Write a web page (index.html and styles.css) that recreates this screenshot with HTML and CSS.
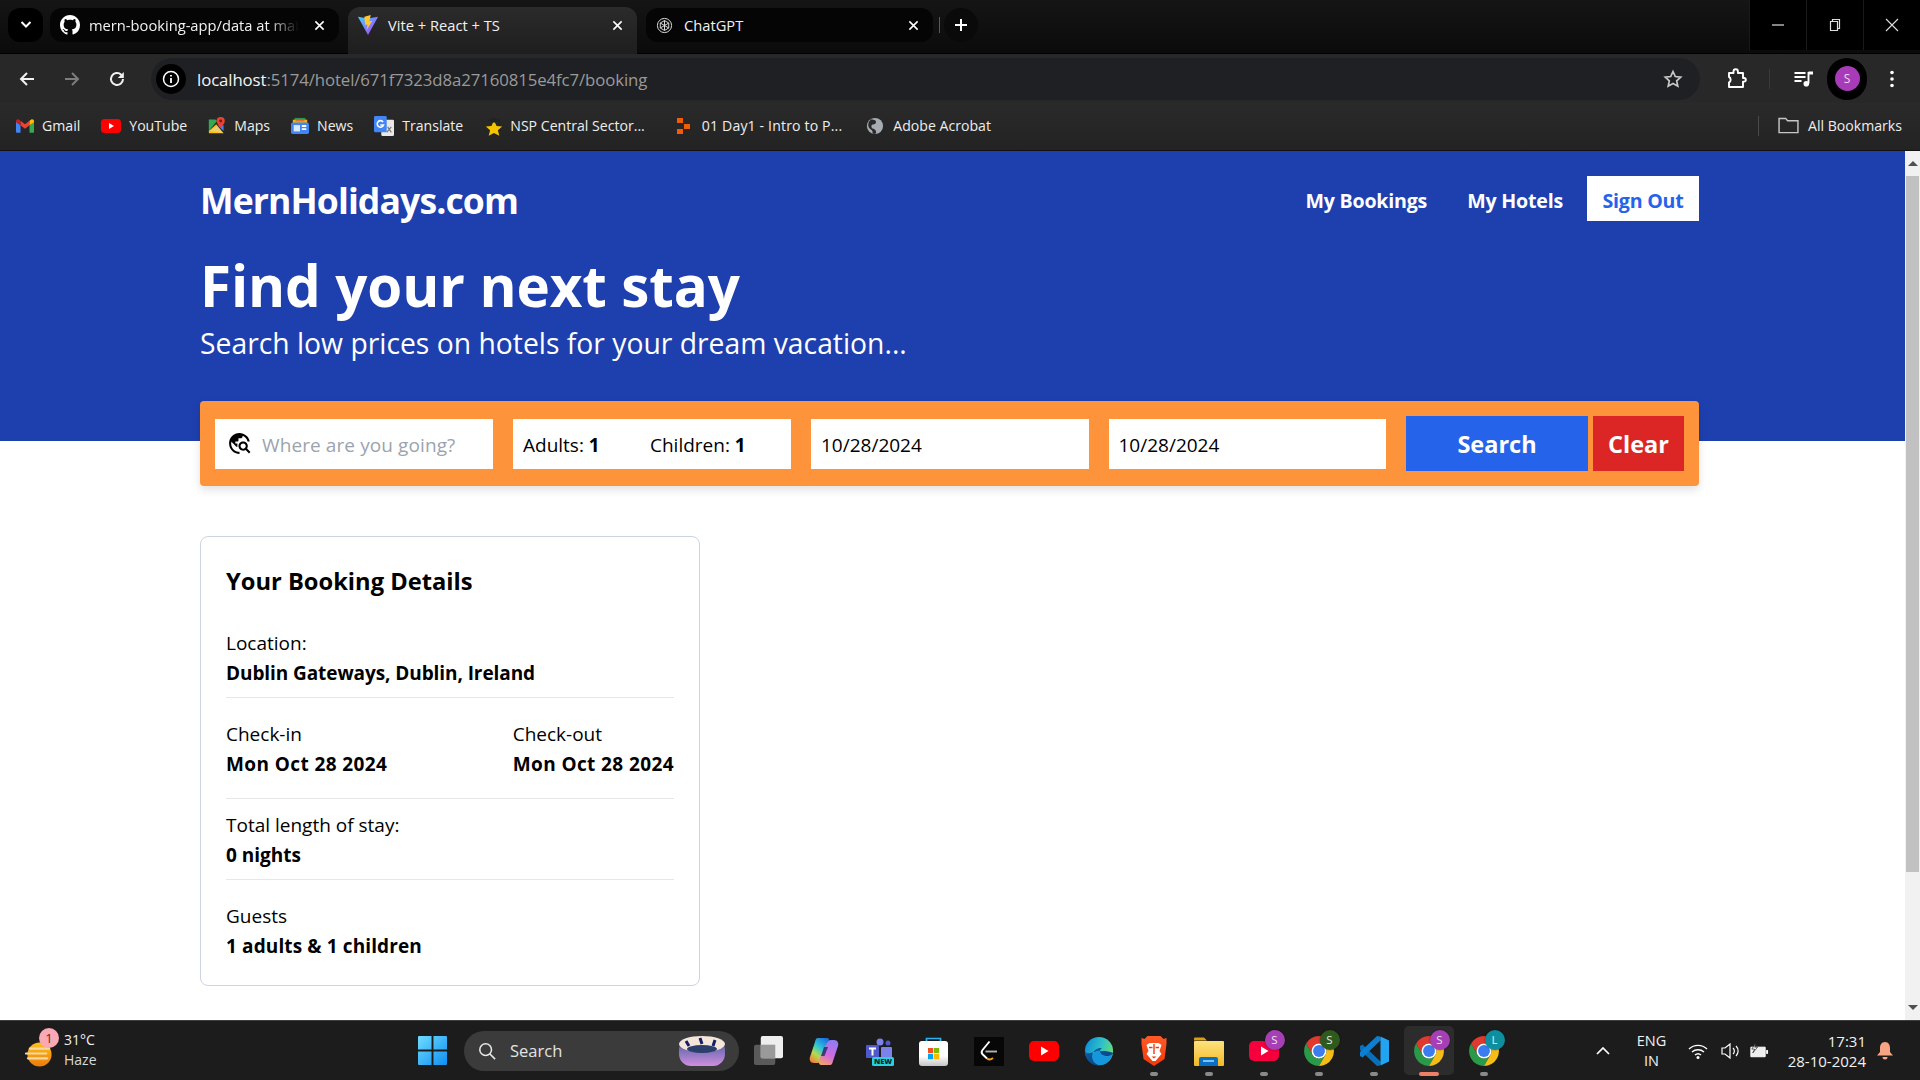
FILE: index.html
```html
<!DOCTYPE html>
<html lang="en">
<head>
<meta charset="utf-8">
<title>Vite + React + TS</title>
<link rel="stylesheet" href="styles.css">
</head>
<body>
<svg class="defs" aria-hidden="true">
  <symbol id="chrome" viewBox="2 2 44 44">
    <path fill="#e0392e" d="M5 13A22 22 0 0 1 43 13H24A11 11 0 0 0 14.500 29.500z"/>
    <path fill="#2b9a48" d="M5 13A22 22 0 0 0 24 46L33.500 29.500A11 11 0 0 1 14.500 29.500z"/>
    <path fill="#f6bd17" d="M43 13A22 22 0 0 1 24 46L33.500 29.500A11 11 0 0 0 24 13z"/>
    <circle cx="24" cy="24" r="11" fill="#fff"/>
    <circle cx="24" cy="24" r="8.700" fill="#3b7df0"/>
  </symbol>
  <symbol id="x" viewBox="0 0 12 12">
    <path d="M1.500 1.500l9 9M10.500 1.500l-9 9" fill="none" stroke="#fff" stroke-width="1.700"/>
  </symbol>
</svg>

<div class="chrome">
  <div class="tabstrip">
    <div class="tab-search"><svg width="14" height="10" viewBox="0 0 14 10"><path d="M2.500 2l4.500 4.500L11.500 2" fill="none" stroke="#fff" stroke-width="2"/></svg></div>
    <div class="tab tab-idle tab-first">
      <svg class="tab-ico" viewBox="0 0 16 16"><path fill="#fff" d="M8 0C3.580 0 0 3.580 0 8c0 3.540 2.290 6.530 5.470 7.590.4.070.55-.17.55-.38 0-.19-.01-.82-.01-1.490-2.010.37-2.530-.49-2.690-.94-.09-.23-.48-.94-.82-1.130-.28-.15-.68-.52-.01-.53.630-.01 1.080.58 1.230.82.720 1.210 1.870.87 2.330.66.070-.52.28-.87.510-1.070-1.780-.2-3.640-.89-3.640-3.950 0-.87.310-1.590.820-2.150-.08-.2-.36-1.020.08-2.120 0 0 .67-.21 2.200.82.640-.18 1.320-.27 2-.27s1.360.09 2 .27c1.530-1.040 2.200-.82 2.200-.82.440 1.100.160 1.920.080 2.120.510.560.820 1.270.820 2.150 0 3.070-1.870 3.750-3.650 3.950.290.250.540.730.540 1.480 0 1.070-.01 1.930-.01 2.200 0 .210.150.460.550.380A8.010 8.010 0 0 0 16 8c0-4.420-3.580-8-8-8z"/></svg>
      <span class="tab-title tab-fade">mern-booking-app/data at mai</span>
      <svg class="tab-close" viewBox="0 0 12 12"><use href="#x"/></svg>
    </div>
    <div class="tab tab-active">
      <svg class="tab-ico" viewBox="0 0 24 24"><defs><linearGradient id="vg" x1="0" y1="0" x2="1" y2="1"><stop offset="0" stop-color="#41d1ff"/><stop offset="1" stop-color="#bd34fe"/></linearGradient></defs><path fill="url(#vg)" d="M1 3l11 2 11-2-11 20z"/><path fill="#ffca28" d="M15 1L8 3l1 9 2.500-.5-1 6 6-10-3 .5z"/></svg>
      <span class="tab-title">Vite + React + TS</span>
      <svg class="tab-close" viewBox="0 0 12 12"><use href="#x"/></svg>
    </div>
    <div class="tab tab-idle tab-third">
      <svg class="tab-ico tab-ico-sm" viewBox="0 0 24 24"><g fill="none" stroke="#ddd" stroke-width="1.400"><circle cx="12" cy="12" r="10"/><path d="M12 5l6 3.500v7L12 19l-6-3.500v-7z"/><path d="M12 5v7l6 3.500M12 12l-6 3.500M6 8.500l6 3.500M18 8.500L12 12M12 12v7"/></g></svg>
      <span class="tab-title">ChatGPT</span>
      <svg class="tab-close" viewBox="0 0 12 12"><use href="#x"/></svg>
    </div>
    <div class="tab-sep"></div>
    <div class="tab-new"><svg width="14" height="14" viewBox="0 0 14 14"><path d="M7 1v12M1 7h12" stroke="#fff" stroke-width="2"/></svg></div>
    <div class="winctl">
      <div class="winbtn"><svg width="12" height="12" viewBox="0 0 12 12"><path d="M0 6h12" stroke="#ddd" stroke-width="1.200"/></svg></div>
      <div class="winbtn"><svg width="12" height="14" viewBox="0 0 12 14"><path d="M1.500 3.500h7v9h-7zM3.500 3.500v-2h7v9h-2" fill="none" stroke="#ddd" stroke-width="1.200"/></svg></div>
      <div class="winbtn"><svg width="14" height="14" viewBox="0 0 14 14"><path d="M1 1l12 12M13 1L1 13" stroke="#ddd" stroke-width="1.100"/></svg></div>
    </div>
  </div>

  <div class="toolbar">
    <svg class="tb-ico tb-back" viewBox="0 0 18 18"><path d="M16 9H3M9 3L3 9l6 6" fill="none" stroke="#f1f1f1" stroke-width="2"/></svg>
    <svg class="tb-ico tb-fwd" viewBox="0 0 18 18"><path d="M2 9h13M9 3l6 6-6 6" fill="none" stroke="#7d7d7d" stroke-width="2"/></svg>
    <svg class="tb-ico tb-reload" viewBox="0 0 18 18"><path d="M15 9a6 6 0 1 1-1.800-4.300L15 6.500" fill="none" stroke="#f1f1f1" stroke-width="2"/><path d="M15.800 2v6h-6z" fill="#f1f1f1"/></svg>
    <div class="omnibox">
      <div class="site-info"><svg width="18" height="18" viewBox="0 0 18 18"><circle cx="9" cy="9" r="7.500" fill="none" stroke="#fff" stroke-width="1.500"/><path d="M9 8v5M9 5v1.600" stroke="#fff" stroke-width="1.800"/></svg></div>
      <span class="url"><span class="url-host">localhost</span>:5174/hotel/671f7323d8a27160815e4fc7/booking</span>
      <svg class="omni-star" viewBox="0 0 20 20"><path d="M10 2.500l2.300 5 5.400.6-4 3.700 1.100 5.400L10 14.500l-4.800 2.700 1.100-5.400-4-3.700 5.400-.6z" fill="none" stroke="#c9c9c9" stroke-width="1.700"/></svg>
    </div>
    <svg class="tb-ext" viewBox="0 0 24 24"><path d="M5 6h4.500V4.500a2.200 2.200 0 0 1 4.400 0V6H19v5h1a1.800 1.800 0 0 1 0 3.600h-1V20H5v-4.500c2.200-.8 2.200-4.700 0-5.500z" fill="none" stroke="#fff" stroke-width="1.900" stroke-linejoin="round"/></svg>
    <div class="tb-sep"></div>
    <svg class="tb-media" viewBox="0 0 20 20"><path d="M1 4h11M1 8h11M1 12h7" stroke="#fff" stroke-width="1.900"/><path d="M15 3v11.500" stroke="#fff" stroke-width="1.900"/><circle cx="12.800" cy="14.800" r="2.800" fill="#fff"/><path d="M15 2.500h4.500v3H15z" fill="#fff"/></svg>
    <div class="profile"><div class="avatar">S</div></div>
    <svg class="tb-menu" viewBox="0 0 4 18"><circle cx="2" cy="2.500" r="1.800" fill="#fff"/><circle cx="2" cy="9" r="1.800" fill="#fff"/><circle cx="2" cy="15.500" r="1.800" fill="#fff"/></svg>
  </div>

  <div class="bookmarks">
    <div class="bm bm-gmail"><svg class="bm-ico" viewBox="0 0 24 18"><path fill="#4285f4" d="M0 3v13.500C0 17.300.7 18 1.500 18H6V8z"/><path fill="#34a853" d="M18 8v10h4.500c.8 0 1.500-.7 1.500-1.500V3z"/><path fill="#ea4335" d="M6 8V2l6 4.500L18 2v6l-6 4.500z"/><path fill="#c5221f" d="M0 2.500V4l6 4V2L4 .5C2.300-.7 0 .5 0 2.500z"/><path fill="#fbbc04" d="M24 2.500V4l-6 4V2l2-1.500c1.700-1.200 4 0 4 2z"/></svg><span>Gmail</span></div>
    <div class="bm bm-yt"><svg class="bm-ico bm-ico-w" viewBox="0 0 20 14"><rect width="20" height="14" rx="3.500" fill="#f00"/><path d="M8 4l5 3-5 3z" fill="#fff"/></svg><span>YouTube</span></div>
    <div class="bm bm-maps"><svg class="bm-ico" viewBox="0 0 20 22"><path fill="#34a853" d="M0 3h8l2 2-10 12z"/><path fill="#fbbc04" d="M0 17L9 9l9 11H1.500A1.500 1.500 0 0 1 0 18.500z"/><path fill="#4285f4" d="M11 10l7 7V10z"/><path fill="#ddd" d="M0 17L18 20l-8-9z" opacity=".5"/><path fill="#ea4335" d="M14.500 0A5 5 0 0 1 19.500 5c0 3.500-5 8-5 8s-5-4.500-5-8a5 5 0 0 1 5-5z"/><circle cx="14.500" cy="5" r="1.800" fill="#7a1a12"/></svg><span>Maps</span></div>
    <div class="bm bm-news"><svg class="bm-ico" viewBox="0 0 20 20"><path fill="#0f9d58" d="M4 1h12v5H4z"/><path fill="#f4b400" d="M2 3h16v5H2z"/><path fill="#ea4335" d="M5 2h10v3H5z" opacity=".6"/><rect x="0" y="6" width="20" height="13" rx="2" fill="#4285f4"/><rect x="3" y="9" width="7" height="7" fill="#dce9fb"/><path d="M12 9h5v2h-5zM12 12.500h5v2h-5z" fill="#fff"/></svg><span>News</span></div>
    <div class="bm bm-tr"><svg class="bm-ico bm-ico-w" viewBox="0 0 22 22"><rect x="8" y="4" width="14" height="18" rx="1.500" fill="#e8e8e8"/><rect width="14" height="18" rx="1.500" fill="#4285f4"/><path d="M10 6.500A3.600 3.600 0 1 0 10.500 10H7" fill="none" stroke="#fff" stroke-width="1.700"/><path d="M15 12l4 6M19 12l-5 6" stroke="#777" stroke-width="1.300"/></svg><span>Translate</span></div>
    <div class="bm bm-nsp"><svg class="bm-ico bm-ico-w" viewBox="0 0 22 22"><path fill="#f5c400" d="M11 5l2.800 6 6.200.6-4.700 4 1.500 6.200L11 18.600l-5.800 3.200 1.500-6.200-4.700-4 6.200-.6z"/><path fill="#222" d="M4 5l7-3 7 3-7 2.500z"/><path d="M17 5v5" stroke="#222" stroke-width="1"/></svg><span>NSP Central Sector...</span></div>
    <div class="bm bm-day"><svg class="bm-ico bm-ico-sq" viewBox="0 0 16 16"><path fill="#f25c05" d="M1 0h6v5H1zM8 6h6v5H8zM1 11h6v5H1z"/></svg><span>01 Day1 - Intro to P...</span></div>
    <div class="bm bm-adobe"><svg class="bm-ico" viewBox="0 0 20 20"><circle cx="10" cy="10" r="9" fill="#a8abb0"/><path d="M6 2.500c3 .5 6 1.500 5 4s-5 1-5 4 4 2 5 5-1 3-2 3.500l-2-1c1-1 0-3-1.500-4S2 11 2.500 8 4 4 6 2.500z" fill="#2a2a2a"/></svg><span>Adobe Acrobat</span></div>
    <div class="bm-all">
      <div class="bm-sep"></div>
      <svg class="bm-folder" viewBox="0 0 22 18"><path d="M1 16.500v-15h7l2 2.500h11v12.500z" fill="none" stroke="#c7c7c7" stroke-width="1.500"/></svg>
      <span>All Bookmarks</span>
    </div>
  </div>
</div>

<div class="viewport">
  <div class="page">
    <header class="hero">
      <div class="hero-inner">
        <div class="topnav">
          <span class="logo">MernHolidays.com</span>
          <nav class="navlinks">
            <a class="navlink">My Bookings</a>
            <a class="navlink">My Hotels</a>
            <a class="signout">Sign Out</a>
          </nav>
        </div>
        <h1 class="hero-title">Find your next stay</h1>
        <p class="hero-sub">Search low prices on hotels for your dream vacation...</p>
      </div>
    </header>
    <div class="content">
      <form class="searchbar">
        <div class="field field-where">
          <svg class="globe" viewBox="0 0 24 24"><path fill="#000" d="M19.300 16.900c.4-.7.7-1.500.7-2.400 0-2.500-2-4.500-4.500-4.500S11 12 11 14.500s2 4.500 4.500 4.500c.9 0 1.700-.3 2.400-.7l3.200 3.200 1.400-1.400-3.200-3.200zm-3.800.1c-1.400 0-2.500-1.100-2.500-2.500s1.100-2.500 2.500-2.500 2.500 1.100 2.500 2.500-1.100 2.500-2.500 2.500zM12 20v2C6.480 22 2 17.520 2 12S6.480 2 12 2c4.840 0 8.870 3.440 9.800 8h-2.070c-.64-2.460-2.400-4.470-4.730-5.410V5c0 1.100-.9 2-2 2h-2v2c0 .55-.45 1-1 1H8v2h2v3H9l-4.790-4.790C4.080 10.790 4 11.380 4 12c0 4.410 3.590 8 8 8z"/></svg>
          <span class="placeholder">Where are you going?</span>
        </div>
        <div class="field field-guests">
          <span class="guest-adults">Adults: <b>1</b></span>
          <span>Children: <b>1</b></span>
        </div>
        <div class="field field-date">10/28/2024</div>
        <div class="field field-date">10/28/2024</div>
        <button class="btn btn-search" type="button">Search</button>
        <button class="btn btn-clear" type="button">Clear</button>
      </form>

      <section class="card">
        <h2 class="card-title">Your Booking Details</h2>
        <div class="row row-location">
          <div>Location:</div>
          <div class="val val-loc">Dublin Gateways, Dublin, Ireland</div>
        </div>
        <div class="row row-dates">
          <div>
            <div>Check-in</div>
            <div class="val val-date">Mon Oct 28 2024</div>
          </div>
          <div>
            <div>Check-out</div>
            <div class="val val-date">Mon Oct 28 2024</div>
          </div>
        </div>
        <div class="row row-stay">
          <div>Total length of stay:</div>
          <div class="val">0 nights</div>
        </div>
        <div class="row-guests">
          <div>Guests</div>
          <div class="val val-guests">1 adults &amp; 1 children</div>
        </div>
      </section>
    </div>
  </div>
  <div class="scrollbar">
    <div class="sb-btn"><span class="arrow-up"></span></div>
    <div class="sb-track"><div class="sb-thumb"></div></div>
    <div class="sb-btn"><span class="arrow-down"></span></div>
  </div>
</div>

<footer class="taskbar">
  <div class="weather">
    <svg class="weather-ico" viewBox="0 0 30 30"><defs><linearGradient id="sun" x1="0" y1="0" x2="0" y2="1"><stop offset="0" stop-color="#fdc21a"/><stop offset="1" stop-color="#ee7a0c"/></linearGradient></defs><circle cx="15" cy="16" r="12.500" fill="url(#sun)"/><path d="M5 10h20M1 15h21M3 20h20" stroke="#f3d9a4" stroke-width="2.200" stroke-linecap="round"/></svg>
    <span class="badge">1</span>
    <div class="weather-text"><span>31°C</span><span class="haze">Haze</span></div>
  </div>
  <svg class="winlogo" viewBox="0 0 30 30"><defs><linearGradient id="wl" x1="0" y1="0" x2="1" y2="1"><stop offset="0" stop-color="#6fdcff"/><stop offset="1" stop-color="#0f8ff0"/></linearGradient></defs><path fill="url(#wl)" d="M0 1a1 1 0 0 1 1-1h13v14H0zM16 0h13a1 1 0 0 1 1 1v13H16zM0 16h14v14H1a1 1 0 0 1-1-1zM16 16h14v13a1 1 0 0 1-1 1H16z"/></svg>
  <div class="tb-search">
    <svg class="tb-search-ico" viewBox="0 0 20 20"><circle cx="8.500" cy="8.500" r="6.500" fill="none" stroke="#e8e8e8" stroke-width="1.700"/><path d="M13 13l6 6" stroke="#e8e8e8" stroke-width="1.800"/></svg>
    <span>Search</span>
    <svg class="carousel" viewBox="0 0 48 32"><defs><linearGradient id="cg" x1="0" y1="0" x2="0" y2="1"><stop offset="0" stop-color="#3c5a98"/><stop offset="1" stop-color="#d08ee0"/></linearGradient></defs><rect x="1" y="3" width="46" height="28" rx="12" fill="url(#cg)"/><ellipse cx="24" cy="9" rx="23" ry="8" fill="#f5e6da"/><ellipse cx="24" cy="14" rx="15" ry="4" fill="#2c3f6b"/><path d="M8 6l3 5M22 3l2 6M37 5l-2 6" stroke="#16206a" stroke-width="3"/></svg>
  </div>
  <svg class="task-view" viewBox="0 0 30 30"><rect x="0" y="9" width="22" height="21" rx="2" fill="#5a5a5a"/><rect x="7" y="0" width="23" height="23" rx="2" fill="#eee"/><rect x="7" y="9" width="15" height="14" fill="#9a9a9a"/></svg>
  <div class="apps">
    <div class="app"><svg viewBox="0 0 30 30"><defs><linearGradient id="co1" x1=".8" y1="0" x2=".2" y2="1"><stop offset="0" stop-color="#1c6fe0"/><stop offset=".4" stop-color="#2ec5d8"/><stop offset=".7" stop-color="#b6d94c"/><stop offset="1" stop-color="#f2803c"/></linearGradient><linearGradient id="co2" x1=".7" y1="0" x2=".3" y2="1"><stop offset="0" stop-color="#8f7cf0"/><stop offset=".6" stop-color="#d36be0"/><stop offset="1" stop-color="#f2a06c"/></linearGradient></defs><path fill="url(#co1)" d="M9 2H18C20 2 20.500 4 20 6L14 22C13 25 11 27 8 27H5C1.500 27 0 24 1 21L6 6C6.500 4 7 2 9 2z"/><path fill="url(#co2)" d="M21 29H12C10 29 9.500 26 10 24L17 9C18 6 20 4 22 4H25C28.500 4 30 7 29 10L24 25C23.500 27 23 29 21 29z"/><path d="M15 11h4l-3.500 9H12z" fill="#15255a" opacity=".75"/></svg></div>
    <div class="app"><svg viewBox="0 0 30 30"><circle cx="16" cy="6" r="3.500" fill="#7b83eb"/><circle cx="24" cy="7" r="2.500" fill="#5059c9"/><rect x="17" y="11" width="11" height="12" rx="1" fill="#7b83eb"/><rect x="2" y="9" width="13" height="13" rx="1" fill="#5059c9"/><path d="M5 12.500h7M8.500 12.500v7" stroke="#fff" stroke-width="2"/></svg><span class="new-tag">NEW</span></div>
    <div class="app"><svg viewBox="0 0 30 30"><defs><linearGradient id="st" x1="0" y1="0" x2="0" y2="1"><stop offset=".6" stop-color="#fff"/><stop offset="1" stop-color="#c4c4c4"/></linearGradient></defs><path d="M7.500 7V2.500h14V7" fill="none" stroke="#2bb3f0" stroke-width="1.700"/><path d="M0 8a3 3 0 0 1 3-3h23a3 3 0 0 1 3 3v19a3 3 0 0 1-3 3H3a3 3 0 0 1-3-3z" fill="url(#st)"/><path fill="#f25022" d="M9 12h5.200v5.200H9z"/><path fill="#7fba00" d="M15 12h5.200v5.200H15z"/><path fill="#00a4ef" d="M9 18h5.200v5.200H9z"/><path fill="#ffb900" d="M15 18h5.200v5.200H15z"/></svg></div>
    <div class="app"><svg viewBox="0 0 30 30"><rect width="30" height="29" y="1" fill="#070707"/><path d="M15.500 5.500L8.500 14c-1.200 1.500-1 3.200.3 4.500L13 22.500" fill="none" stroke="#fff" stroke-width="1.900"/><path d="M13 22.500c2 1.500 4 1.300 6-.5" fill="none" stroke="#f89f1b" stroke-width="1.900"/><path d="M11.500 15.500H23" stroke="#b3b3b3" stroke-width="1.900"/></svg></div>
    <div class="app"><svg viewBox="0 0 30 30"><rect y="5" width="30" height="20" rx="5" fill="#f00"/><path d="M12 10.500l7.500 4.500-7.500 4.500z" fill="#fff"/></svg></div>
    <div class="app"><svg viewBox="0 0 30 32"><defs><linearGradient id="eg" x1="0" y1=".3" x2="1" y2=".6"><stop offset="0" stop-color="#0f8fd8"/><stop offset=".55" stop-color="#2fc3c8"/><stop offset="1" stop-color="#6ddc70"/></linearGradient><linearGradient id="eb" x1="0" y1="0" x2="1" y2="1"><stop offset="0" stop-color="#0e5ea8"/><stop offset="1" stop-color="#0a3d78"/></linearGradient></defs><circle cx="15" cy="16" r="15" fill="url(#eg)"/><path d="M30 18c0 2-3 3.500-6.500 3.500-4 0-7.500-2-7.500-5 0-1.500 1-3 2-3.500-6-1-10.500 4-10 9 .5 4 4 9 10 9.400C8 33 0 26 0 16 2 23 14 12 30 18z" fill="url(#eb)"/><path d="M16 16.500c.5 3 3 4.800 7 5 3 0 5.500-1 6.500-2.500-1 7-7 12-13 12-6 0-9-5-8.500-8.500.4-4 4-8 8-7-1 .3-.5 1-.5 1.500z" fill="#1497dc"/></svg></div>
    <div class="app has-dot"><svg viewBox="-2.500 0 30 30"><defs><linearGradient id="br" x1="0" y1="0" x2="0" y2="1"><stop offset="0" stop-color="#ff5a26"/><stop offset="1" stop-color="#f2390a"/></linearGradient></defs><path d="M6 0h13l3 3 3-1v6l-2 15-10.500 7L2 23 0 8V2l3 1z" fill="url(#br)"/><path d="M5 9l3-2h9l3 2-2 6 2 3-6 7h-3l-6-7 2-3z" fill="#fff"/><path d="M7.500 11.500h3.500M14 11.500h3.500M12.500 8v10" stroke="#f2390a" stroke-width="1.400"/><path d="M10 20.500h5l-2.500 2z" fill="#f2390a"/></svg></div>
    <div class="app has-dot"><svg viewBox="0 0 30 30"><defs><linearGradient id="fo" x1="0" y1="0" x2="0" y2="1"><stop offset="0" stop-color="#fde27e"/><stop offset="1" stop-color="#f2b928"/></linearGradient></defs><path d="M0 2.500A1 1 0 0 1 1 1.500h9l3 3H0z" fill="#d9a012"/><rect y="5" width="30" height="25" rx="1" fill="url(#fo)"/><path d="M5 30v-7a2 2 0 0 1 2-2h15a2 2 0 0 1 2 2v7z" fill="#0b6fc4"/><rect x="9" y="24" width="11" height="2" fill="#7cc4f5"/></svg></div>
    <div class="app has-dot"><svg viewBox="0 0 30 30"><rect y="5" width="30" height="20" rx="5" fill="#f5003c"/><path d="M12 10.500l7.500 4.500-7.500 4.500z" fill="#fff"/></svg><span class="pbadge pb-purple">S</span></div>
    <div class="app has-dot"><svg viewBox="0 0 44 44"><use href="#chrome"/></svg><span class="pbadge pb-green">S</span></div>
    <div class="app has-dot"><svg viewBox="0 0 30 30"><path d="M1 10l2.500-1.500L22 26l-1 3.500-3 .5L1 14z" fill="#0a6fb8"/><path d="M1 20l2.500 1.500L22 4l-1-3.500-3-.5L1 16z" fill="#0c7fd2"/><path d="M21.500 0.500L30 4.500v21l-8.500 4z" fill="#23a4f2"/></svg></div>
    <div class="app has-dot app-active"><svg viewBox="0 0 44 44"><use href="#chrome"/></svg><span class="pbadge pb-purple">S</span></div>
    <div class="app has-dot"><svg viewBox="0 0 44 44"><use href="#chrome"/></svg><span class="pbadge pb-teal">L</span></div>
  </div>
  <div class="tray">
    <svg class="tray-chev" viewBox="0 0 14 8"><path d="M1 7l6-6 6 6" fill="none" stroke="#fff" stroke-width="1.700"/></svg>
    <div class="lang"><span>ENG</span><span>IN</span></div>
    <svg class="tray-wifi" viewBox="0 0 20 16"><path d="M1 6a13 13 0 0 1 18 0M4 9a9 9 0 0 1 12 0M7 12a4.500 4.500 0 0 1 6 0" fill="none" stroke="#fff" stroke-width="1.400"/><circle cx="10" cy="14.500" r="1.500" fill="#fff"/></svg>
    <svg class="tray-vol" viewBox="0 0 20 16"><path d="M1 5h3l5-4v14l-5-4H1z" fill="none" stroke="#fff" stroke-width="1.200"/><path d="M12 5a4 4 0 0 1 0 6M15 3a7 7 0 0 1 0 10" fill="none" stroke="#fff" stroke-width="1.200"/></svg>
    <svg class="tray-bat" viewBox="0 0 22 16"><path d="M3 4h15v10H3z" fill="#eee" stroke="#fff"/><path d="M19 7h2v4h-2z" fill="#fff"/><path d="M8 0L4 6h3l-2 4 5-6H7z" fill="#fff" stroke="#1c1c1c" stroke-width=".7"/></svg>
    <div class="clock"><span>17:31</span><span>28-10-2024</span></div>
    <svg class="tray-bell" viewBox="0 0 16 18"><path d="M8 0c3.500 0 5 3 5 6v4l3 3.500H0L3 10V6c0-3 1.500-6 5-6z" fill="#f5a582"/><path d="M5.500 15h5a2.500 2.500 0 0 1-5 0z" fill="#f5a582"/></svg>
  </div>
</footer>
</body>
</html>
```

FILE: styles.css
```css
* { box-sizing: border-box; }
html, body { margin: 0; padding: 0; height: 100%; overflow: hidden; }
body {
  display: flex;
  flex-direction: column;
  height: 1080px;
  font-family: "Open Sans", "Noto Sans", "Liberation Sans", sans-serif;
  background: #fff;
  color: #000;
}
.defs { display: none; }

/* browser chrome */
.chrome { flex: none; height: 151px; display: flex; flex-direction: column; color: #f1f1f1; }
.tabstrip {
  height: 54px; flex: none; display: flex; align-items: flex-start;
  background: linear-gradient(#151515, #0b0b0b);
  border-bottom: 1px solid #000;
  padding-left: 8px; position: relative;
}
.tab-search {
  width: 35px; height: 34px; margin-top: 8px; border-radius: 12px; background: #000;
  display: flex; align-items: center; justify-content: center; margin-right: 7px;
}
.tab { display: flex; align-items: center; position: relative; font-size: 14.700px; }
.tab-idle { height: 34px; margin-top: 8px; background: #050505; border-radius: 12px; }
.tab-first { width: 289px; margin-right: 9px; }
.tab-active {
  width: 289px; height: 47px; margin-top: 7px; margin-right: 9px;
  background: linear-gradient(#2b2b2b, #1e1e1e); border-radius: 12px 12px 0 0; padding-bottom: 11px;
}
.tab-third { width: 287px; margin-right: 6px; }
.tab-ico { width: 20px; height: 20px; margin-left: 10px; flex: none; }
.tab-ico-sm { width: 17px; height: 17px; }
.tab-active .tab-ico { width: 22px; height: 22px; margin-left: 9px; }
.tab-third .tab-ico { margin-left: 10px; }
.tab-title { margin-left: 9px; white-space: nowrap; flex: none; color: #f1f1f1; }
.tab-third .tab-title { margin-left: 11px; }
.tab-fade { -webkit-mask-image: linear-gradient(90deg, #000 85%, transparent 100%); mask-image: linear-gradient(90deg, #000 85%, transparent 100%); }
.tab-close { position: absolute; right: 14px; width: 11px; height: 11px; }
.tab-sep { width: 1px; height: 16px; background: #5a5a5a; margin: 17px 4px 0 0; }
.tab-new {
  width: 34px; height: 34px; margin-top: 8px; border-radius: 50%; background: #0a0a0a;
  display: flex; align-items: center; justify-content: center;
}
.winctl { margin-left: auto; display: flex; height: 50px; background: #000; }
.winbtn { width: 57px; display: flex; align-items: center; justify-content: center; border-left: 1px solid #1a1a1a; }

.toolbar {
  height: 49px; flex: none; display: flex; align-items: center; padding-left: 18px;
  background: #282828; position: relative;
}
.tb-ico { width: 18px; height: 18px; flex: none; margin-right: 27px; }
.omnibox {
  width: 1549px; height: 42px; margin-left: -2px; border-radius: 21px; background: #1f2023;
  display: flex; align-items: center; flex: none; padding-left: 5px;
}
.site-info { width: 30px; height: 30px; border-radius: 50%; background: #000; display: flex; align-items: center; justify-content: center; flex: none; }
.url { margin-left: 11px; margin-top: 2px; font-size: 16.800px; color: #9a9a9a; white-space: nowrap; letter-spacing: -.1px; }
.url-host { color: #f4f4f4; }
.omni-star { width: 20px; height: 20px; margin-left: auto; margin-right: 17px; }
.tb-ext { width: 24px; height: 24px; margin-left: 24px; flex: none; }
.tb-sep { width: 1px; height: 20px; background: #3a3a3a; margin-left: 21px; flex: none; }
.tb-media { width: 21px; height: 20px; margin-left: 23px; flex: none; }
.profile { width: 40px; height: 42px; border-radius: 20px; background: #000; margin-left: 13px; display: flex; align-items: center; justify-content: center; flex: none; }
.avatar { width: 25px; height: 25px; border-radius: 50%; background: #a83bb8; color: #f0d8f4; font-size: 12px; display: flex; align-items: center; justify-content: center; }
.tb-menu { width: 4px; height: 18px; margin-left: 23px; flex: none; }

.bookmarks {
  height: 48px; flex: none; display: flex; align-items: center; padding: 0 0 2px 16px;
  background: linear-gradient(#2a2a2a, #232323); font-size: 14.100px; color: #eee;
  border-bottom: 1px solid #111;
}
.bm { display: flex; align-items: center; gap: 8px; margin-right: 21px; white-space: nowrap; }
.bm-ico { width: 18px; height: 18px; flex: none; }
.bm-ico-w { width: 20px; height: 20px; }
.bm-ico-sq { width: 16px; height: 16px; }
.bm-nsp { gap: 6px; margin-right: 31px; }
.bm-day { gap: 10px; margin-right: 24px; letter-spacing: .15px; }
.bm-adobe { gap: 9px; }
.bm-all { margin-left: auto; display: flex; align-items: center; padding-right: 18px; }
.bm-sep { width: 1px; height: 20px; background: #4a4a4a; margin-right: 19px; }
.bm-folder { width: 21px; height: 17px; margin-right: 9px; }

/* page */
.viewport { flex: 1; min-height: 0; display: flex; overflow: hidden; }
.page { flex: 1; min-width: 0; background: #fff; overflow: hidden; }
.hero { background: #1e40af; height: 290px; }
.hero-inner { padding: 25px 206px 0 200px; color: #fff; }
.topnav { display: flex; justify-content: space-between; align-items: flex-start; }
.logo { font-size: 35.600px; font-weight: 700; letter-spacing: -.9px; line-height: 48px; }
.navlinks { display: flex; align-items: center; }
.navlink { font-size: 19.600px; font-weight: 700; line-height: 49px; height: 45px; margin-right: 40px; letter-spacing: -.2px; }
.navlink + .navlink { margin-right: 24px; }
.signout { background: #fff; color: #2563eb; font-size: 19.600px; font-weight: 700; height: 45px; line-height: 49px; width: 112px; text-align: center; letter-spacing: -.2px; }
.hero-title { margin: 24px 0 0; font-size: 56.500px; font-weight: 700; line-height: 75px; letter-spacing: -.1px; }
.hero-sub { margin: 0; font-size: 28.300px; line-height: 40px; font-weight: 400; }

.content { padding: 0 206px 0 200px; }
.searchbar {
  margin-top: -40px; height: 85px; padding: 15px; display: flex; align-items: center;
  background: #fd943c; border-radius: 4px; box-shadow: 0 4px 8px rgba(0,0,0,.12);
  position: relative; font-size: 19px;
}
.field { height: 50px; background: #fff; display: flex; align-items: center; flex: none; width: 278px; margin-right: 20px; }
.field-where { padding-left: 12px; }
.globe { width: 25px; height: 25px; flex: none; }
.placeholder { margin-left: 10px; margin-top: 2px; color: #9ca3af; white-space: nowrap; letter-spacing: .1px; }
.field-guests { padding: 2px 0 0 10px; }
.guest-adults { width: 127px; }
.field-date { padding: 2px 0 0 10px; width: 277.500px; }
.btn { border: 0; height: 55px; color: #fff; font: inherit; font-size: 23.500px; font-weight: 700; flex: none; padding: 0; }
.btn-search { width: 182px; background: #2563eb; margin-right: 5px; }
.btn-clear { width: 91px; background: #dc2626; }

.card {
  margin-top: 50px; width: 500px; height: 450px; border: 1px solid #cbd5e1; border-radius: 8px;
  padding: 25px 25px 0; font-size: 19px; line-height: 30px;
}
.card-title { margin: 0 0 28px; font-size: 23.700px; line-height: 38px; font-weight: 700; }
.val { font-weight: 700; }
.val-loc { letter-spacing: -.08px; }
.val-date { letter-spacing: .4px; }
.val-guests { letter-spacing: .12px; }
.row { border-bottom: 1px solid #e5e7eb; }
.row-location { padding-bottom: 9px; margin-bottom: 21px; }
.row-dates { display: flex; justify-content: space-between; padding-bottom: 19px; margin-bottom: 11px; }
.row-stay { padding-bottom: 9px; margin-bottom: 21px; }

.scrollbar { width: 15px; flex: none; background: #f1f1f1; display: flex; flex-direction: column; }
.sb-btn { height: 15px; flex: none; display: flex; align-items: center; justify-content: center; margin: 5px 0; }
.sb-track { flex: 1; min-height: 0; padding: 0 1px; }
.sb-thumb { height: 696px; background: #c1c1c1; }
.arrow-up { border: 5px solid transparent; border-top: 0; border-bottom: 5px solid #505050; }
.arrow-down { border: 5px solid transparent; border-bottom: 0; border-top: 5px solid #505050; }

/* taskbar */
.taskbar {
  height: 60px; flex: none; background: #1c1c1c; border-top: 1px solid #3e3e3e; display: flex; align-items: center;
  color: #f1f1f1; font-size: 14.300px; position: relative;
}
.weather { width: 64px; margin-left: 25px; height: 100%; display: flex; align-items: center; position: relative; flex: none; }
.weather-ico { width: 29px; height: 29px; flex: none; margin-top: 5px; }
.badge { position: absolute; left: 14px; top: 7px; width: 20px; height: 20px; border-radius: 50%; background: #f9a8b4; color: #5a2a30; font-size: 13px; text-align: center; line-height: 20px; }
.weather-text { display: flex; flex-direction: column; margin: -2px 0 0 10px; line-height: 20px; font-size: 14px; white-space: nowrap; }
.haze { color: #d8d8d8; }
.winlogo { width: 29px; height: 29px; margin-left: 329px; flex: none; }
.tb-search {
  width: 275px; height: 40px; margin-left: 17px; background: #3b3b3b; border-radius: 20px; flex: none;
  display: flex; align-items: center; padding-left: 14px; font-size: 16.500px; color: #e3e3e3;
}
.tb-search-ico { width: 18px; height: 18px; flex: none; margin-right: 14px; }
.carousel { width: 48px; height: 32px; margin-left: auto; margin-right: 13px; }
.task-view { width: 29px; height: 29px; margin-left: 15px; flex: none; }
.apps { display: flex; margin-left: 13px; flex: none; height: 100%; align-items: center; }
.app { width: 55px; height: 49px; display: flex; align-items: center; justify-content: center; position: relative; border-radius: 5px; flex: none; }
.app svg { width: 30px; height: 30px; }
.has-dot::after { content: ""; position: absolute; bottom: -1px; left: 50%; margin-left: -4px; width: 8px; height: 4px; border-radius: 2px; background: #8a8a8a; }
.app-active { background: #2c2c2c; width: 50px; margin: 0 2.500px; }
.app-active::after { background: #ef8068; width: 20px; margin-left: -10px; }
.new-tag { position: absolute; left: 21px; top: 31px; width: 22px; height: 9px; border-radius: 1.500px; background: #2ad0e0; color: #06262c; font-size: 7.500px; font-weight: 800; line-height: 9px; text-align: center; }
.pbadge { position: absolute; right: 6.500px; top: 3.500px; width: 20px; height: 20px; border-radius: 50%; color: #e8e8e8; font-size: 11.500px; text-align: center; line-height: 20px; box-shadow: 0 0 2px rgba(0,0,0,.5); }
.app-active .pbadge { right: 4px; }
.pb-purple { background: #a63eb5; }
.pb-green { background: #2f5a1e; }
.pb-teal { background: #0e8fa0; }
.tray { margin-left: auto; display: flex; align-items: center; height: 100%; flex: none; }
.tray-chev { width: 14px; height: 8px; margin-right: 27px; }
.lang { display: flex; flex-direction: column; align-items: center; line-height: 20px; margin-right: 21.500px; font-size: 14.500px; }
.tray-wifi { width: 20px; height: 16px; margin-right: 13px; }
.tray-vol { width: 20px; height: 16px; margin-right: 7px; }
.tray-bat { width: 21px; height: 16px; margin-right: 19px; }
.clock { display: flex; flex-direction: column; align-items: flex-end; line-height: 20px; font-size: 15px; margin-right: 11px; }
.tray-bell { width: 16px; height: 18px; margin-right: 27px; }
```
